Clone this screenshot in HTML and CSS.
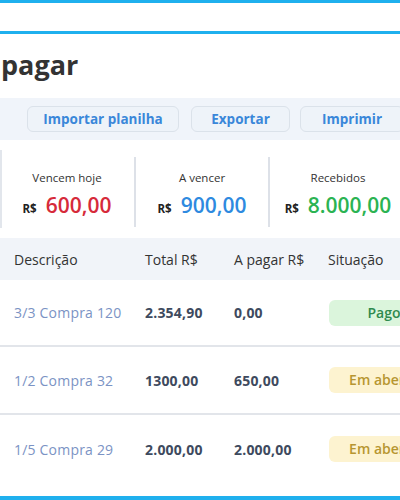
FILE: index.html
```html
<!DOCTYPE html>
<html lang="pt">
<head>
<meta charset="utf-8">
<link rel="stylesheet" href="styles.css">
</head>
<body>
<div class="frame">
  <div class="topbar"></div>
  <h1 class="title">pagar</h1>
  <div class="toolbar">
    <button class="btn btn-import">Importar planilha</button>
    <button class="btn btn-export">Exportar</button>
    <button class="btn btn-print">Imprimir</button>
  </div>
  <div class="stats">
    <div class="stat">
      <div class="stat-label">Vencem hoje</div>
      <div class="stat-value"><span class="cur">R$</span><span class="amt red">600,00</span></div>
    </div>
    <div class="stat">
      <div class="stat-label">A vencer</div>
      <div class="stat-value"><span class="cur">R$</span><span class="amt blue">900,00</span></div>
    </div>
    <div class="stat">
      <div class="stat-label">Recebidos</div>
      <div class="stat-value"><span class="cur">R$</span><span class="amt green">8.000,00</span></div>
    </div>
  </div>
  <div class="table">
    <div class="row head">
      <div class="c1">Descrição</div>
      <div class="c2">Total R$</div>
      <div class="c3">A pagar R$</div>
      <div class="c4">Situação</div>
    </div>
    <div class="row">
      <div class="c1 desc">3/3 Compra 120</div>
      <div class="c2 num">2.354,90</div>
      <div class="c3 num">0,00</div>
      <div class="c4"><span class="badge paid">Pago</span></div>
    </div>
    <div class="row">
      <div class="c1 desc">1/2 Compra 32</div>
      <div class="c2 num">1300,00</div>
      <div class="c3 num">650,00</div>
      <div class="c4"><span class="badge open">Em aberto</span></div>
    </div>
    <div class="row last">
      <div class="c1 desc">1/5 Compra 29</div>
      <div class="c2 num">2.000,00</div>
      <div class="c3 num">2.000,00</div>
      <div class="c4"><span class="badge open">Em aberto</span></div>
    </div>
  </div>
</div>
</body>
</html>
```
FILE: styles.css
```css
* { box-sizing: border-box; }
html, body { margin: 0; padding: 0; }
body {
  width: 400px;
  height: 500px;
  overflow: hidden;
  background: #fff;
  font-family: "Open Sans", "Noto Sans", sans-serif;
  color: #333;
}
.frame {
  height: 500px;
  border-bottom: 4px solid #1fb0ee;
  overflow: hidden;
}
.topbar {
  height: 34px;
  border-top: 3px solid #1fb0ee;
  border-bottom: 3px solid #1fb0ee;
}
.title {
  margin: 0;
  height: 64px;
  padding: 15px 0 0 1px;
  font-size: 27px;
  font-weight: 700;
  color: #333;
  line-height: 32px;
}
.toolbar {
  display: flex;
  align-items: center;
  gap: 12px;
  height: 42px;
  padding-left: 27px;
  background: #f0f4fa;
  white-space: nowrap;
}
.btn {
  flex: none;
  height: 26px;
  border: 1px solid #dbe2ea;
  border-radius: 6px;
  background: #eef3f9;
  color: #3a87d9;
  font-family: inherit;
  font-size: 13.5px;
  font-weight: 700;
  padding: 0;
}
.btn-import { width: 152px; }
.btn-export { width: 99px; }
.btn-print { width: 104px; margin-left: -2px; }
.stats {
  display: flex;
  height: 98px;
  align-items: center;
  position: relative;
  padding-top: 6px;
}
.stats::before {
  content: "";
  position: absolute;
  left: 0; top: 10px; bottom: 10px;
  width: 2px;
  background: #e2e6ec;
}
.stat {
  flex: none;
  width: 136px;
  height: 70px;
  display: flex;
  flex-direction: column;
  align-items: center;
  justify-content: center;
  gap: 6px;
  padding-top: 8px;
  border-right: 2px solid #dde1e8;
}
.stat:nth-child(2) { width: 134px; }
.stat:last-child { border-right: none; }
.stat-label {
  font-size: 11.5px;
  color: #333;
  line-height: 16px;
}
.stat-value {
  display: flex;
  align-items: baseline;
  gap: 9px;
  line-height: 26px;
}
.cur {
  font-size: 11.5px;
  font-weight: 700;
  color: #222;
}
.amt {
  font-size: 21px;
  font-weight: 600;
}
.red { color: #d62a3a; }
.blue { color: #2e8ae0; }
.green { color: #2bb352; }
.table { display: flex; flex-direction: column; }
.row {
  display: flex;
  align-items: center;
  height: 68px;
  border-bottom: 2px solid #e2e5ea;
  font-size: 14px;
  white-space: nowrap;
}
.row.last { border-bottom: none; }
.row.head {
  height: 42px;
  background: #f1f4f9;
  border-bottom: none;
  color: #333;
}
.row.head + .row { height: 67px; }
.c1 { width: 145px; padding-left: 14px; flex: none; }
.c2 { width: 89px; flex: none; }
.c3 { width: 94px; flex: none; }
.c4 { flex: none; width: 120px; }
.desc { color: #7b93c4; letter-spacing: 0.2px; }
.num { font-weight: 700; color: #3e4a5e; letter-spacing: 0.2px; }
.badge {
  display: inline-block;
  width: 110px;
  height: 26px;
  line-height: 26px;
  border-radius: 6px;
  text-align: center;
  font-size: 14px;
  font-weight: 600;
  margin-left: 1px;
}
.paid { background: #dbf5dc; color: #2f8a4e; }
.open { background: #fdf3d0; color: #b79630; }
```
